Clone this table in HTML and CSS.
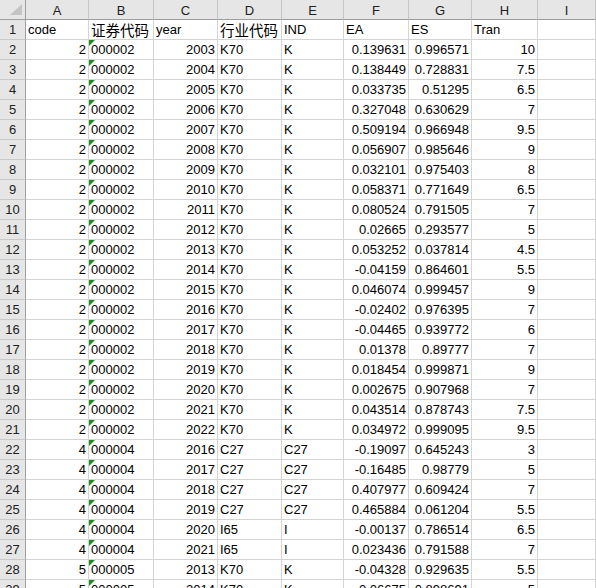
FILE: index.html
```html
<!DOCTYPE html>
<html lang="zh">
<head>
<meta charset="utf-8">
<title>Sheet</title>
<link rel="stylesheet" href="styles.css">
</head>
<body>
<div class="sheet">
  <div class="r hd">
    <span class="corner"><svg width="14" height="12" viewBox="0 0 14 12"><polygon points="13,0 13,11 1,11" fill="#c4c4c4"/></svg></span>
    <span>A</span><span>B</span><span>C</span><span>D</span><span>E</span><span>F</span><span>G</span><span>H</span><span>I</span>
  </div>
  <div class="r"><span class="h">1</span><span>code</span><span><b class="cjk">证券代码</b></span><span>year</span><span><b class="cjk">行业代码</b></span><span>IND</span><span>EA</span><span>ES</span><span>Tran</span><span></span></div>
  <div class="r"><span class="h">2</span><span class="n">2</span><span class="g">000002</span><span class="n">2003</span><span>K70</span><span>K</span><span class="n">0.139631</span><span class="n">0.996571</span><span class="n">10</span><span></span></div>
  <div class="r"><span class="h">3</span><span class="n">2</span><span class="g">000002</span><span class="n">2004</span><span>K70</span><span>K</span><span class="n">0.138449</span><span class="n">0.728831</span><span class="n">7.5</span><span></span></div>
  <div class="r"><span class="h">4</span><span class="n">2</span><span class="g">000002</span><span class="n">2005</span><span>K70</span><span>K</span><span class="n">0.033735</span><span class="n">0.51295</span><span class="n">6.5</span><span></span></div>
  <div class="r"><span class="h">5</span><span class="n">2</span><span class="g">000002</span><span class="n">2006</span><span>K70</span><span>K</span><span class="n">0.327048</span><span class="n">0.630629</span><span class="n">7</span><span></span></div>
  <div class="r"><span class="h">6</span><span class="n">2</span><span class="g">000002</span><span class="n">2007</span><span>K70</span><span>K</span><span class="n">0.509194</span><span class="n">0.966948</span><span class="n">9.5</span><span></span></div>
  <div class="r"><span class="h">7</span><span class="n">2</span><span class="g">000002</span><span class="n">2008</span><span>K70</span><span>K</span><span class="n">0.056907</span><span class="n">0.985646</span><span class="n">9</span><span></span></div>
  <div class="r"><span class="h">8</span><span class="n">2</span><span class="g">000002</span><span class="n">2009</span><span>K70</span><span>K</span><span class="n">0.032101</span><span class="n">0.975403</span><span class="n">8</span><span></span></div>
  <div class="r"><span class="h">9</span><span class="n">2</span><span class="g">000002</span><span class="n">2010</span><span>K70</span><span>K</span><span class="n">0.058371</span><span class="n">0.771649</span><span class="n">6.5</span><span></span></div>
  <div class="r"><span class="h">10</span><span class="n">2</span><span class="g">000002</span><span class="n">2011</span><span>K70</span><span>K</span><span class="n">0.080524</span><span class="n">0.791505</span><span class="n">7</span><span></span></div>
  <div class="r"><span class="h">11</span><span class="n">2</span><span class="g">000002</span><span class="n">2012</span><span>K70</span><span>K</span><span class="n">0.02665</span><span class="n">0.293577</span><span class="n">5</span><span></span></div>
  <div class="r"><span class="h">12</span><span class="n">2</span><span class="g">000002</span><span class="n">2013</span><span>K70</span><span>K</span><span class="n">0.053252</span><span class="n">0.037814</span><span class="n">4.5</span><span></span></div>
  <div class="r"><span class="h">13</span><span class="n">2</span><span class="g">000002</span><span class="n">2014</span><span>K70</span><span>K</span><span class="n">-0.04159</span><span class="n">0.864601</span><span class="n">5.5</span><span></span></div>
  <div class="r"><span class="h">14</span><span class="n">2</span><span class="g">000002</span><span class="n">2015</span><span>K70</span><span>K</span><span class="n">0.046074</span><span class="n">0.999457</span><span class="n">9</span><span></span></div>
  <div class="r"><span class="h">15</span><span class="n">2</span><span class="g">000002</span><span class="n">2016</span><span>K70</span><span>K</span><span class="n">-0.02402</span><span class="n">0.976395</span><span class="n">7</span><span></span></div>
  <div class="r"><span class="h">16</span><span class="n">2</span><span class="g">000002</span><span class="n">2017</span><span>K70</span><span>K</span><span class="n">-0.04465</span><span class="n">0.939772</span><span class="n">6</span><span></span></div>
  <div class="r"><span class="h">17</span><span class="n">2</span><span class="g">000002</span><span class="n">2018</span><span>K70</span><span>K</span><span class="n">0.01378</span><span class="n">0.89777</span><span class="n">7</span><span></span></div>
  <div class="r"><span class="h">18</span><span class="n">2</span><span class="g">000002</span><span class="n">2019</span><span>K70</span><span>K</span><span class="n">0.018454</span><span class="n">0.999871</span><span class="n">9</span><span></span></div>
  <div class="r"><span class="h">19</span><span class="n">2</span><span class="g">000002</span><span class="n">2020</span><span>K70</span><span>K</span><span class="n">0.002675</span><span class="n">0.907968</span><span class="n">7</span><span></span></div>
  <div class="r"><span class="h">20</span><span class="n">2</span><span class="g">000002</span><span class="n">2021</span><span>K70</span><span>K</span><span class="n">0.043514</span><span class="n">0.878743</span><span class="n">7.5</span><span></span></div>
  <div class="r"><span class="h">21</span><span class="n">2</span><span class="g">000002</span><span class="n">2022</span><span>K70</span><span>K</span><span class="n">0.034972</span><span class="n">0.999095</span><span class="n">9.5</span><span></span></div>
  <div class="r"><span class="h">22</span><span class="n">4</span><span class="g">000004</span><span class="n">2016</span><span>C27</span><span>C27</span><span class="n">-0.19097</span><span class="n">0.645243</span><span class="n">3</span><span></span></div>
  <div class="r"><span class="h">23</span><span class="n">4</span><span class="g">000004</span><span class="n">2017</span><span>C27</span><span>C27</span><span class="n">-0.16485</span><span class="n">0.98779</span><span class="n">5</span><span></span></div>
  <div class="r"><span class="h">24</span><span class="n">4</span><span class="g">000004</span><span class="n">2018</span><span>C27</span><span>C27</span><span class="n">0.407977</span><span class="n">0.609424</span><span class="n">7</span><span></span></div>
  <div class="r"><span class="h">25</span><span class="n">4</span><span class="g">000004</span><span class="n">2019</span><span>C27</span><span>C27</span><span class="n">0.465884</span><span class="n">0.061204</span><span class="n">5.5</span><span></span></div>
  <div class="r"><span class="h">26</span><span class="n">4</span><span class="g">000004</span><span class="n">2020</span><span>I65</span><span>I</span><span class="n">-0.00137</span><span class="n">0.786514</span><span class="n">6.5</span><span></span></div>
  <div class="r"><span class="h">27</span><span class="n">4</span><span class="g">000004</span><span class="n">2021</span><span>I65</span><span>I</span><span class="n">0.023436</span><span class="n">0.791588</span><span class="n">7</span><span></span></div>
  <div class="r"><span class="h">28</span><span class="n">5</span><span class="g">000005</span><span class="n">2013</span><span>K70</span><span>K</span><span class="n">-0.04328</span><span class="n">0.929635</span><span class="n">5.5</span><span></span></div>
  <div class="r"><span class="h">29</span><span class="n">5</span><span class="g">000005</span><span class="n">2014</span><span>K70</span><span>K</span><span class="n">-0.06675</span><span class="n">0.898691</span><span class="n">5</span><span></span></div>
</div>
</body>
</html>
```
FILE: styles.css
```css
html, body {
  margin: 0;
  padding: 0;
  background: #fff;
  overflow: hidden;
}
body {
  font-family: "Liberation Sans", Arial, sans-serif;
  font-size: 13px;
  color: #000;
}
.sheet {
  width: 596px;
  height: 588px;
  overflow: hidden;
}
.r {
  display: grid;
  grid-template-columns: 26px 63px 65px 64px 64px 62px 65px 63px 66px 58px;
  height: 20px;
}
.r > span {
  box-sizing: border-box;
  height: 20px;
  padding: 1px 2px 0 2px;
  line-height: 18px;
  border-right: 1px solid #d4d4d4;
  border-bottom: 1px solid #d4d4d4;
  white-space: nowrap;
  overflow: hidden;
}
.r > .n {
  text-align: right;
}
.r > .h {
  background: #e6e6e6;
  text-align: center;
  color: #222;
  border-right-color: #9e9e9e;
  border-bottom-color: #c9c9c9;
  padding-left: 0;
  padding-right: 0;
}
.hd > span {
  background: #e6e6e6;
  text-align: center;
  color: #222;
  border-right-color: #c6c6c6;
  border-bottom-color: #9e9e9e;
  padding-top: 2px;
  line-height: 17px;
}
.hd > .corner {
  border-right-color: #9e9e9e;
  padding: 4px 0 0 9px;
  text-align: left;
  line-height: 0;
}
.g {
  position: relative;
}
.g::before {
  content: "";
  position: absolute;
  left: 0;
  top: 0;
  border-top: 6px solid #1e8c1e;
  border-right: 6px solid transparent;
}
.cjk {
  font-weight: normal;
  font-family: "Noto Sans CJK SC", "Noto Sans CJK JP", sans-serif;
  font-size: 14.5px;
  line-height: 18px;
}
```
